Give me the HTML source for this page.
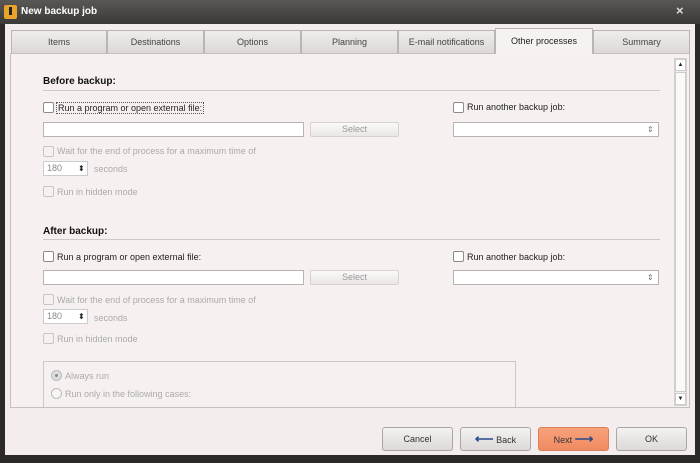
<!DOCTYPE html>
<html><head><meta charset="utf-8"><style>
*{box-sizing:border-box;margin:0;padding:0}
body{width:700px;height:463px;overflow:hidden;background:#2b2a28;font-family:"Liberation Sans",sans-serif;font-size:9px;color:#222;position:relative}
.a{position:absolute}
.title{left:0;top:0;width:700px;height:24px;background:linear-gradient(#5a5855,#3a3936);color:#fff;font-weight:bold;font-size:10px;line-height:24px;padding-left:21px}
.win{left:5px;top:24px;width:690px;height:431px;background:#f3eeed}
.tab{top:30px;height:23px;background:linear-gradient(#f0ecea,#dcd8d6);border:1px solid #b9b5b3;border-bottom:none;text-align:center;line-height:22px;color:#444}
.tab.act{top:28px;height:26px;background:#f6f2f1;color:#222;line-height:24px}
.panel{left:10px;top:53px;width:680px;height:355px;border:1px solid #c4c0be;background:#f6f1f0}
.h{font-weight:bold;font-size:10px;color:#111}
.line{height:1px;background:#cfcac8}
.cb{width:11px;height:11px;border:1px solid #8e8a88;background:#fff;border-radius:2px}
.cb.d{border-color:#c9c5c3;background:#f5f1f0}
.inp{height:15px;border:1px solid #b8b4b2;background:#fff}
.btn{height:15px;border:1px solid #d6d2d0;border-radius:2px;background:linear-gradient(#fbfaf9,#e9e6e5);color:#999;text-align:center;line-height:13px}
.dis{color:#aaa}
.bb{top:427px;height:24px;width:71px;border:1px solid #aaa6a4;border-radius:3px;background:linear-gradient(#f4f3f2,#dcd9d8);text-align:center;line-height:22px;color:#333}
</style></head><body>
<div class="a title">New backup job</div>
<div class="a" style="left:4px;top:5px;width:13px;height:14px;background:#e8a32a;border-radius:2px"><div class="a" style="left:5px;top:2px;width:3px;height:8px;background:#222"></div></div>
<div class="a" style="left:676px;top:3px;color:#ddd;font-size:13px;font-weight:bold">×</div>
<div class="a win"></div>
<div class="a panel"></div>
<div class="a tab" style="left:11px;width:96px">Items</div>
<div class="a tab" style="left:107px;width:97px">Destinations</div>
<div class="a tab" style="left:204px;width:97px">Options</div>
<div class="a tab" style="left:301px;width:97px">Planning</div>
<div class="a tab" style="left:398px;width:97px">E-mail notifications</div>
<div class="a tab act" style="left:495px;width:98px">Other processes</div>
<div class="a tab" style="left:593px;width:97px">Summary</div>
<div class="a" style="left:674px;top:58px;width:13px;height:348px;background:#f0ecea;border:1px solid #d4d0ce"></div>
<div class="a" style="left:675px;top:59px;width:11px;height:12px;background:#fff;border:1px solid #ccc;font-size:6px;text-align:center;line-height:10px">▲</div>
<div class="a" style="left:675px;top:72px;width:11px;height:320px;background:#fbf9f8;border:1px solid #ccc"></div>
<div class="a" style="left:675px;top:393px;width:11px;height:12px;background:#fff;border:1px solid #ccc;font-size:6px;text-align:center;line-height:10px">▼</div>

<div class="a h" style="left:43px;top:76px">Before backup:</div>
<div class="a line" style="left:43px;top:90px;width:617px"></div>
<div class="a cb" style="left:43px;top:102px"></div>
<div class="a" style="left:56px;top:102px;border:1px dotted #555;padding:0 1px">Run a program or open external file:</div>
<div class="a cb" style="left:453px;top:102px"></div>
<div class="a" style="left:467px;top:102px">Run another backup job:</div>
<div class="a inp" style="left:43px;top:122px;width:261px"></div>
<div class="a btn" style="left:310px;top:122px;width:89px">Select</div>
<div class="a inp" style="left:453px;top:122px;width:206px"></div>
<div class="a" style="left:647px;top:122px;font-size:8px;line-height:15px;color:#777">⇕</div>
<div class="a cb d" style="left:43px;top:146px"></div>
<div class="a dis" style="left:57px;top:146px">Wait for the end of process for a maximum time of</div>
<div class="a inp" style="left:43px;top:161px;width:45px;border-color:#ccc;color:#888;padding-left:3px;line-height:13px">180</div>
<div class="a" style="left:78px;top:161px;font-size:8px;line-height:15px">⬍</div>
<div class="a dis" style="left:94px;top:164px">seconds</div>
<div class="a cb d" style="left:43px;top:186px"></div>
<div class="a dis" style="left:57px;top:187px">Run in hidden mode</div>

<div class="a h" style="left:43px;top:226px">After backup:</div>
<div class="a line" style="left:43px;top:239px;width:617px"></div>
<div class="a cb" style="left:43px;top:251px"></div>
<div class="a" style="left:57px;top:252px">Run a program or open external file:</div>
<div class="a cb" style="left:453px;top:251px"></div>
<div class="a" style="left:467px;top:252px">Run another backup job:</div>
<div class="a inp" style="left:43px;top:270px;width:261px"></div>
<div class="a btn" style="left:310px;top:270px;width:89px">Select</div>
<div class="a inp" style="left:453px;top:270px;width:206px"></div>
<div class="a" style="left:647px;top:270px;font-size:8px;line-height:15px;color:#777">⇕</div>
<div class="a cb d" style="left:43px;top:294px"></div>
<div class="a dis" style="left:57px;top:295px">Wait for the end of process for a maximum time of</div>
<div class="a inp" style="left:43px;top:309px;width:45px;border-color:#ccc;color:#888;padding-left:3px;line-height:13px">180</div>
<div class="a" style="left:78px;top:309px;font-size:8px;line-height:15px">⬍</div>
<div class="a dis" style="left:94px;top:313px">seconds</div>
<div class="a cb d" style="left:43px;top:333px"></div>
<div class="a dis" style="left:57px;top:334px">Run in hidden mode</div>
<div class="a" style="left:43px;top:361px;width:473px;height:46px;border:1px solid #ccc8c6;border-bottom:none"></div>
<div class="a" style="left:51px;top:370px;width:11px;height:11px;border-radius:50%;border:1px solid #bbb;background:#ddd"><div class="a" style="left:3px;top:3px;width:3px;height:3px;border-radius:50%;background:#888"></div></div>
<div class="a dis" style="left:65px;top:371px">Always run</div>
<div class="a" style="left:51px;top:388px;width:11px;height:11px;border-radius:50%;border:1px solid #bbb;background:#f8f6f5"></div>
<div class="a dis" style="left:65px;top:389px">Run only in the following cases:</div>
<div class="a" style="left:10px;top:407px;width:680px;height:1px;background:#c4c0be"></div>

<div class="a bb" style="left:382px">Cancel</div>
<div class="a bb" style="left:460px"><span style="color:#2a4a8a;font-size:13px;font-weight:bold">⟵</span> Back</div>
<div class="a bb" style="left:538px;background:linear-gradient(#f8a27c,#f08a60);border-color:#d9805a">Next <span style="color:#2a4a8a;font-size:13px;font-weight:bold">⟶</span></div>
<div class="a bb" style="left:616px">OK</div>
</body></html>
